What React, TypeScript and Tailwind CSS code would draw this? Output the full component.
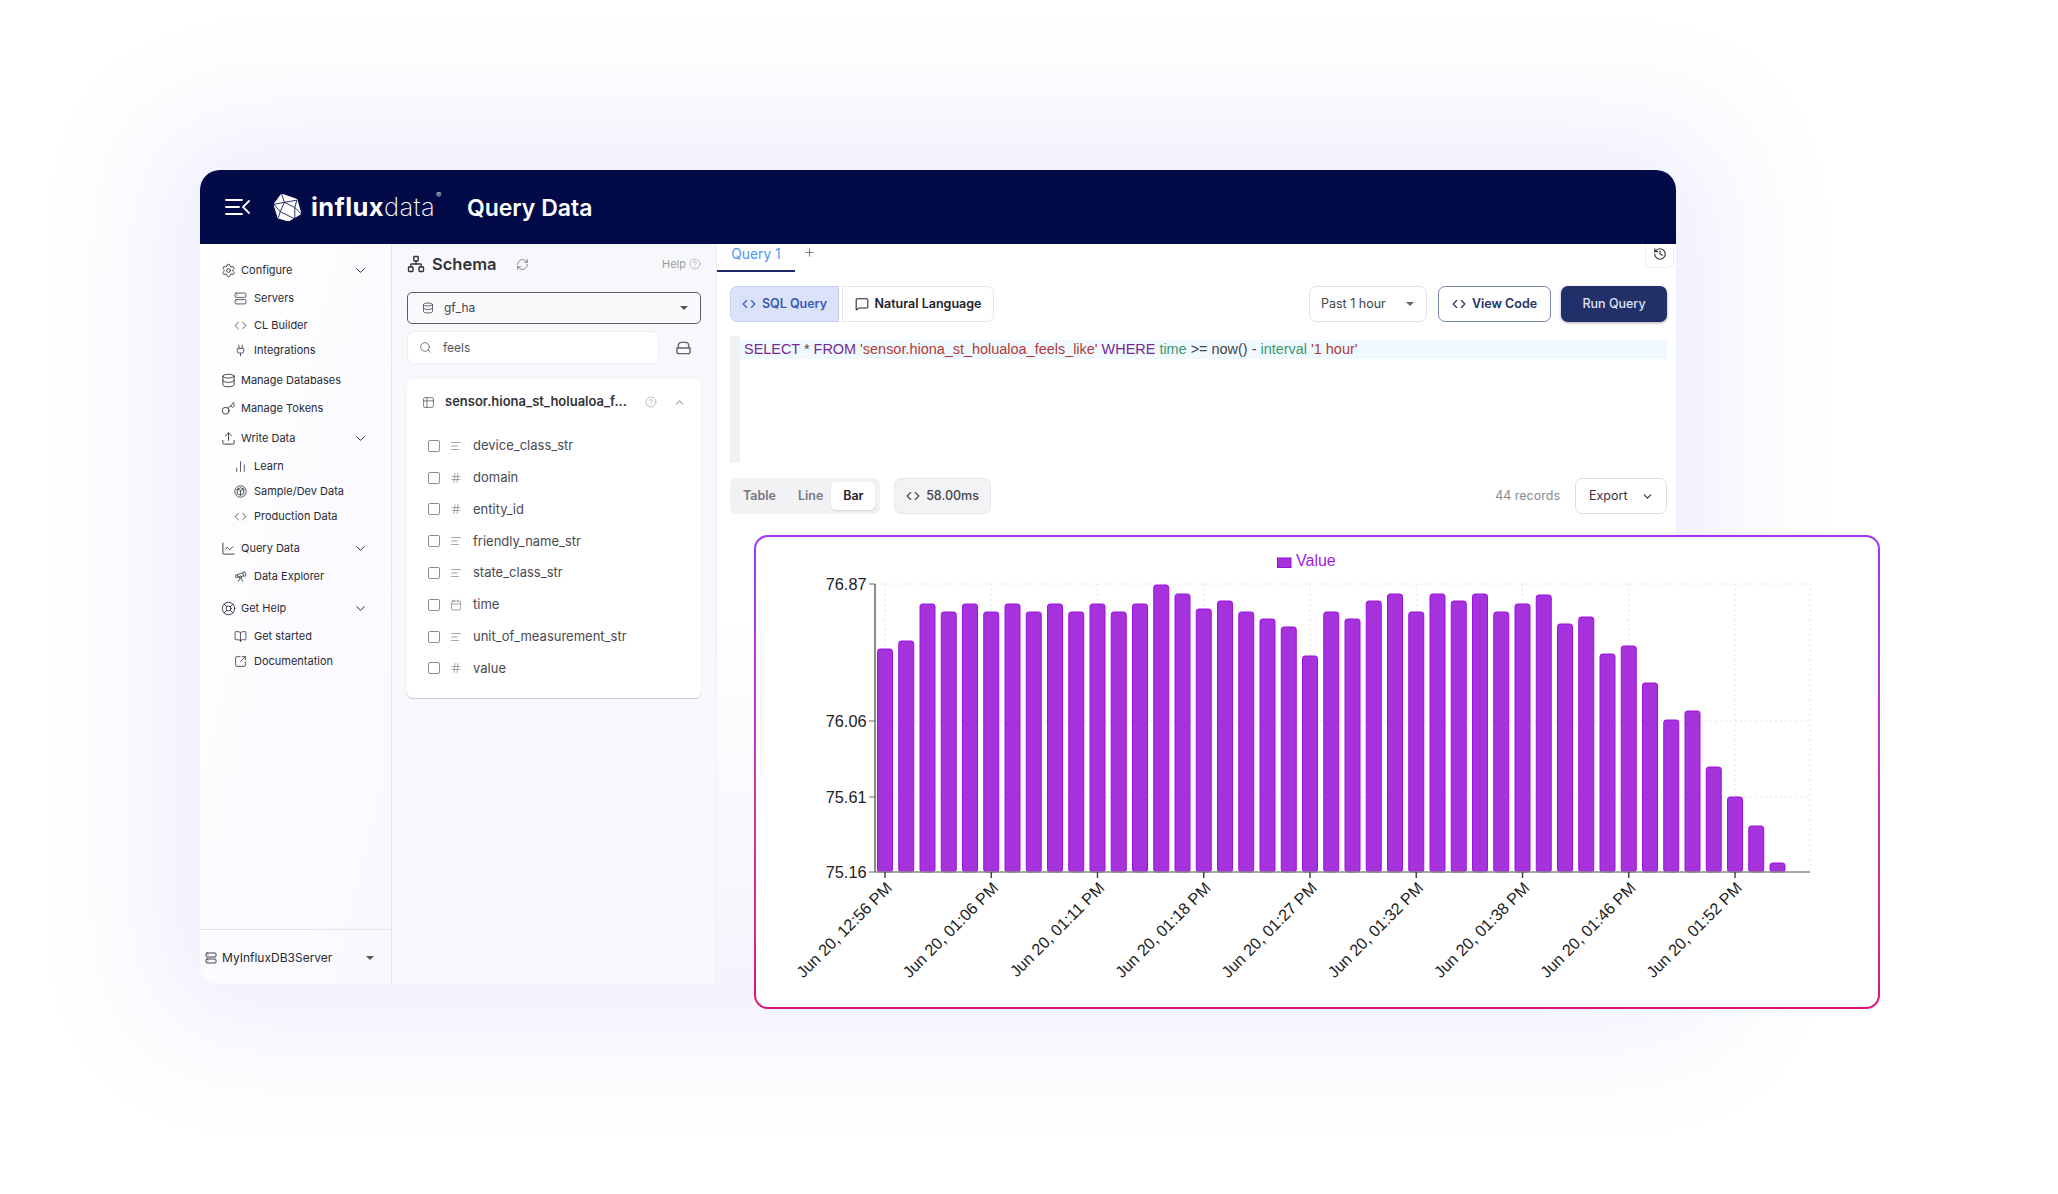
import React from "react";
import {
  BookOpen,
  Calendar,
  ChartLine,
  ChartNoAxesColumn,
  ChevronDown,
  ChevronUp,
  CircleHelp,
  Code,
  Database,
  Hash,
  History,
  Key,
  LifeBuoy,
  MessageSquare,
  Network,
  Plug,
  Plus,
  RefreshCw,
  Search,
  Server,
  Settings,
  SquareArrowOutUpRight,
  Table2,
  Telescope,
  Text,
  Upload,
} from "lucide-react";

type IconProps = { size?: number; strokeWidth?: number; className?: string };

const CubeCircle = ({ size = 13, className }: IconProps) => (
  <svg width={size} height={size} viewBox="0 0 16 16" fill="none" stroke="currentColor" strokeWidth="1" className={className}>
    <circle cx="8" cy="8" r="7" />
    <path d="M4 5 L8 3.4 L12 5 V10.8 L8 12.6 L4 10.8 Z M4 5 L8 6.8 L12 5 M8 6.8 V12.6" strokeLinejoin="round" />
  </svg>
);

const NAV = [
  { label: "Configure", Icon: Settings, top: true, chevron: true, gap: "mt-0" },
  { label: "Servers", Icon: Server, gap: "mt-[4px]" },
  { label: "CL Builder", Icon: Code, gap: "mt-[3px]" },
  { label: "Integrations", Icon: Plug, gap: "mt-[1px]" },
  { label: "Manage Databases", Icon: Database, top: true, gap: "mt-[6px]" },
  { label: "Manage Tokens", Icon: Key, top: true, gap: "mt-[4px]" },
  { label: "Write Data", Icon: Upload, top: true, chevron: true, gap: "mt-[6px]" },
  { label: "Learn", Icon: ChartNoAxesColumn, gap: "mt-[4px]" },
  { label: "Sample/Dev Data", Icon: CubeCircle, gap: "mt-[1px]" },
  { label: "Production Data", Icon: Code, gap: "mt-[1px]" },
  { label: "Query Data", Icon: ChartLine, top: true, chevron: true, gap: "mt-[8px]" },
  { label: "Data Explorer", Icon: Telescope, gap: "mt-[4px]" },
  { label: "Get Help", Icon: LifeBuoy, top: true, chevron: true, gap: "mt-[8px]" },
  { label: "Get started", Icon: BookOpen, gap: "mt-[4px]" },
  { label: "Documentation", Icon: SquareArrowOutUpRight, gap: "mt-[1px]" },
];

const FIELDS = [
  { name: "device_class_str", Icon: Text },
  { name: "domain", Icon: Hash },
  { name: "entity_id", Icon: Hash },
  { name: "friendly_name_str", Icon: Text },
  { name: "state_class_str", Icon: Text },
  { name: "time", Icon: Calendar },
  { name: "unit_of_measurement_str", Icon: Text },
  { name: "value", Icon: Hash },
];

// bar heights in pixels above the x axis
const BARS = [
  223, 231, 268, 260, 268, 260, 268, 260, 268, 260, 268, 260, 268, 287, 278, 263, 271, 260, 253, 245, 216, 260, 253, 271,
  278, 260, 278, 271, 278, 260, 268, 277, 248, 255, 218, 226, 189, 152, 161, 105, 75, 46, 9,
];

const X_LABELS = ["12:56", "01:06", "01:11", "01:18", "01:27", "01:32", "01:38", "01:46", "01:52"];

const Y_LABELS = [
  { label: "76.87", y: 583 },
  { label: "76.06", y: 720 },
  { label: "75.61", y: 796 },
  { label: "75.16", y: 871 },
];

const AXIS_Y = 871;

function Logo() {
  return (
    <svg width="27" height="27" viewBox="0 0 26 26" className="shrink-0">
      <polygon points="7.3,0 22,5.3 26,19 14,26 4,23 0,10" fill="#ffffff" stroke="#ffffff" strokeLinejoin="round" />
      <g fill="none" stroke="#020a47" strokeWidth="0.8" strokeLinejoin="round">
        <path d="M7.3,0 L10,8 L0,10 M10,8 L22,6 M10,8 L6,17 L0,10 M6,17 L4,23 M6,17 L20,24 M10,8 L20,13 L22,6 M20,13 L26,19 M20,13 L20,24" />
      </g>
    </svg>
  );
}

function Chart() {
  return (
    <svg viewBox="756 536 1122 470" className="block h-[470px] w-[1122px]">
      <rect x="1277.5" y="557" width="13.5" height="9.5" fill="#a632dc" stroke="#9a10e0" />
      <text x="1296" y="565" fontSize="16" fill="#a020e8" fontFamily="Liberation Sans, sans-serif">
        Value
      </text>
      <g stroke="#e4e4e4" strokeDasharray="2 3" strokeWidth="1">
        {Y_LABELS.slice(0, 3).map((t) => (
          <line key={t.y} x1="875" x2="1810" y1={t.y} y2={t.y} />
        ))}
        {X_LABELS.map((_, i) => (
          <line key={i} x1={885 + i * 106.25} x2={885 + i * 106.25} y1="583" y2={AXIS_Y} />
        ))}
        <line x1="1810" x2="1810" y1="583" y2={AXIS_Y} />
      </g>
      {BARS.map((h, i) => (
        <rect
          key={i}
          x={877.5 + i * 21.25}
          y={AXIS_Y - h}
          width="15"
          height={h}
          rx="2.5"
          fill="#a632dc"
          stroke="#9a10e0"
          strokeWidth="1"
        />
      ))}
      <line x1="875" x2="875" y1="583" y2={AXIS_Y} stroke="#666666" strokeWidth="1.5" />
      <line x1="875" x2="1810" y1={AXIS_Y} y2={AXIS_Y} stroke="#888888" strokeWidth="1.5" />
      {Y_LABELS.map((t) => (
        <g key={t.y}>
          <line x1="869" x2="875" y1={t.y} y2={t.y} stroke="#666666" strokeWidth="1" />
          <text
            x="866.5"
            y={t.y + 5.5}
            textAnchor="end"
            fontSize="16.3"
            fill="#222222"
            fontFamily="Liberation Sans, sans-serif"
          >
            {t.label}
          </text>
        </g>
      ))}
      {X_LABELS.map((t, i) => {
        const x = 885 + i * 106.25;
        return (
          <g key={t}>
            <line x1={x} x2={x} y1={AXIS_Y} y2={AXIS_Y + 6} stroke="#444444" strokeWidth="1.5" />
            <text
              x={x + 8}
              y={AXIS_Y + 17}
              textAnchor="end"
              fontSize="16.2"
              fill="#222222"
              fontFamily="Liberation Sans, sans-serif"
              transform={`rotate(-45 ${x + 8} ${AXIS_Y + 17})`}
            >
              {`Jun 20, ${t} PM`}
            </text>
          </g>
        );
      })}
    </svg>
  );
}

export default function App() {
  return (
    <div className="relative h-[1194px] w-[2058px] overflow-hidden bg-white pl-[200px] pt-[170px] font-['Inter',sans-serif]">
      <div className="flex h-[814px] w-[1476px] flex-col rounded-t-[20px] rounded-b-[18px] bg-white shadow-[0_0_120px_50px_rgba(95,95,245,0.1)]">
        <header className="flex h-[74px] shrink-0 items-center rounded-t-[20px] bg-[#020a47] pl-[25px] text-white">
          <svg width="25" height="18" viewBox="0 0 25 18" fill="none" stroke="#ffffff" strokeWidth="1.8" strokeLinecap="round">
            <path d="M1 2 H17 M1 9 H14 M1 16 H17 M24 3 L18 9 L24 15" />
          </svg>
          <div className="ml-[24px]">
            <Logo />
          </div>
          <div className="ml-[10px] flex items-start text-[25.5px] leading-none tracking-[0.4px]">
            <span className="font-bold">influx</span>
            <span className="font-extralight">data</span>
            <span className="ml-[1px] mt-[-3px] text-[8px] font-light">®</span>
          </div>
          <h1 className="ml-[25px] mt-[2px] text-[23px] font-semibold leading-none">Query Data</h1>
        </header>

        <div className="flex min-h-0 flex-1 rounded-b-[18px]">
          <aside className="flex w-[192px] shrink-0 flex-col rounded-bl-[18px] border-r border-[#e2e3ee] bg-gradient-to-br from-white to-[#f8f8ff] pt-[14px] text-[11px] text-[#2a2a33]">
            <nav className="flex-1">
              {NAV.map(({ label, Icon, top, chevron, gap }) => (
                <div key={label} className={`flex h-[24px] items-center ${gap} ${top ? "pl-[21px]" : "pl-[34px]"}`}>
                  <Icon size={top ? 15 : 13} strokeWidth={1.4} className="shrink-0" />
                  <span className={top ? "ml-[5px]" : "ml-[7px]"}>{label}</span>
                  {chevron && <ChevronDown size={15} strokeWidth={1.6} className="ml-auto mr-[23px]" />}
                </div>
              ))}
            </nav>
            <div className="flex h-[55px] items-center border-t border-[#e4e4ea] pl-[5px] pt-[2px] text-[12px]">
              <Server size={12} strokeWidth={1.8} />
              <span className="ml-[5px]">MyInfluxDB3Server</span>
              <span className="ml-auto mr-[17px] h-0 w-0 border-x-[4px] border-t-[4px] border-x-transparent border-t-[#555555]" />
            </div>
          </aside>

          <section className="flex w-[324px] shrink-0 flex-col bg-[#f7f8fc] pl-[15px] pr-[15px]">
            <div className="mt-[6px] flex h-[28px] items-center">
              <Network size={18} strokeWidth={1.8} className="text-[#333333]" />
              <span className="ml-[7px] text-[16.5px] font-semibold text-[#333338]">Schema</span>
              <RefreshCw size={13} strokeWidth={1.6} className="ml-[19px] text-[#777777]" />
              <span className="ml-auto text-[11px] text-[#9a9aa2]">Help</span>
              <CircleHelp size={12} strokeWidth={1.3} className="ml-[3px] text-[#9a9aa2]" />
            </div>
            <div className="mt-[14px] flex h-[32px] items-center rounded-[5px] border-[1.5px] border-[#5c5c60] bg-[#fafafc] pl-[14px] pr-[12px] text-[12px] text-[#44444c]">
              <Database size={12} strokeWidth={1.6} />
              <span className="ml-[10px]">gf_ha</span>
              <span className="ml-auto h-0 w-0 border-x-[4.5px] border-t-[4.5px] border-x-transparent border-t-[#555555]" />
            </div>
            <div className="mt-[7px] flex items-center">
              <div className="flex h-[33px] w-[252px] items-center rounded-[7px] border border-[#eeeef2] bg-white pl-[11px] text-[12px] text-[#55555c]">
                <Search size={13} strokeWidth={1.4} />
                <span className="ml-[11px]">feels</span>
              </div>
              <svg width="15" height="14" viewBox="0 0 16 14" fill="none" stroke="#666666" strokeWidth="1.5" strokeLinejoin="round" className="ml-[17px]">
                <path d="M2.5 7 V4 a3 3 0 0 1 3-3 h5 a3 3 0 0 1 3 3 V7 M1 7 h14 v4 a2 2 0 0 1-2 2 H3 a2 2 0 0 1-2-2 Z" />
              </svg>
            </div>
            <div className="mt-[15px] h-[319px] rounded-[6px] bg-white shadow-[0_1px_1px_#c9c9d2]">
              <div className="flex h-[46px] items-center pl-[15px] pr-[15px]">
                <Table2 size={13} strokeWidth={1.4} className="text-[#555555]" />
                <span className="ml-[10px] text-[13px] font-semibold text-[#33333a]">sensor.hiona_st_holualoa_f...</span>
                <CircleHelp size={12} strokeWidth={1.2} className="ml-auto mr-[16px] text-[#9a9aa2]" />
                <ChevronUp size={13} strokeWidth={1.6} className="text-[#666666]" />
              </div>
              <div className="pt-[5px]">
                {FIELDS.map(({ name, Icon }) => (
                  <div key={name} className="flex h-[31.8px] items-center pl-[21px] text-[13px] text-[#4a4a52]">
                    <span className="h-[12px] w-[12px] rounded-[2px] border-[1.5px] border-[#8c8c92]" />
                    <Icon size={12} strokeWidth={1.6} className="ml-[10px] text-[#8f8f96]" />
                    <span className="ml-[11px]">{name}</span>
                  </div>
                ))}
              </div>
            </div>
          </section>

          <main className="min-w-0 flex-1 rounded-br-[18px] border-l border-[#eeeef4] bg-gradient-to-b from-white via-white to-[#f4f4fd] pr-[9px]">
            <div className="flex h-[28px]">
              <div className="flex h-[28px] w-[78px] justify-center border-b-2 border-[#1d2a66] text-[13.8px] leading-[20px] text-[#4d96f2]">Query 1</div>
              <Plus size={13} strokeWidth={1.6} className="ml-[8px] mt-[2px] text-[#666666]" />
              <div className="ml-auto mr-[-7px] flex h-[24px] w-[29px] items-center justify-center rounded-b-[6px] border border-t-0 border-[#eeeef2] bg-white">
                <History size={14} strokeWidth={2} className="mt-[-4px] text-[#333333]" />
              </div>
            </div>

            <div className="mt-[14px] flex items-center pl-[13px] text-[12.5px]">
              <button className="flex h-[36px] w-[109px] items-center justify-center rounded-l-[7px] border border-[#c6d1f6] bg-[#dbe3fb] font-semibold text-[#3a58b8]">
                <Code size={14} strokeWidth={2} />
                <span className="ml-[6px]">SQL Query</span>
              </button>
              <button className="ml-[3px] flex h-[36px] w-[152px] items-center justify-center rounded-r-[7px] border border-[#e6e6ee] bg-white font-semibold text-[#22222a]">
                <MessageSquare size={14} strokeWidth={1.8} />
                <span className="ml-[6px]">Natural Language</span>
              </button>
              <button className="ml-auto flex h-[36px] w-[118px] items-center rounded-[7px] border border-[#dfdfe6] bg-white pl-[11px] pr-[12px] text-[#44444c]">
                Past 1 hour
                <span className="ml-auto h-0 w-0 border-x-[4px] border-t-[4px] border-x-transparent border-t-[#666666]" />
              </button>
              <button className="ml-[11px] flex h-[36px] w-[113px] items-center justify-center rounded-[7px] border border-[#7a86b4] bg-white font-semibold text-[#22306a]">
                <Code size={14} strokeWidth={2} />
                <span className="ml-[6px]">View Code</span>
              </button>
              <button className="ml-[10px] h-[36px] w-[106px] rounded-[7px] bg-[#22306a] font-medium text-[#dfe3f4] shadow-[0_1px_3px_rgba(0,0,0,0.35)]">
                Run Query
              </button>
            </div>

            <div className="mt-[14px] flex h-[127px] pl-[13px]">
              <div className="w-[10px] shrink-0 bg-[#f1f2f5]" />
              <div className="flex-1 pt-[4px]">
                <div className="h-[19px] whitespace-pre bg-[#f0f9fe] pl-[4px] font-['Liberation_Sans',sans-serif] text-[14.45px] leading-[19px] text-[#444444]">
                  <span className="text-[#7a2a90]">SELECT</span>
                  {" * "}
                  <span className="text-[#7a2a90]">FROM</span>
                  {" "}
                  <span className="text-[#b03a3a]">'sensor.hiona_st_holualoa_feels_like'</span>
                  {" "}
                  <span className="text-[#7a2a90]">WHERE</span>
                  {" "}
                  <span className="text-[#3a9a70]">time</span>
                  {" >= now() - "}
                  <span className="text-[#3a9a70]">interval</span>
                  {" "}
                  <span className="text-[#b03a3a]">'1 hour'</span>
                </div>
              </div>
            </div>

            <div className="mt-[15px] flex items-center pl-[13px] text-[12.5px]">
              <div className="flex h-[36px] w-[150px] items-center rounded-[6px] bg-[#f2f2f5] pl-[13px] font-semibold text-[#77777e]">
                <span>Table</span>
                <span className="ml-[22px]">Line</span>
                <span className="ml-[8px] flex h-[28px] w-[44px] items-center justify-center rounded-[5px] bg-white text-[#22222a] shadow-[0_1px_2px_rgba(0,0,0,0.12)]">Bar</span>
              </div>
              <div className="ml-[14px] flex h-[36px] w-[97px] items-center justify-center rounded-[7px] border border-[#e6e6ec] bg-[#f3f3f6] text-[#44444c]">
                <Code size={14} strokeWidth={2} />
                <span className="ml-[6px] font-medium">58.00ms</span>
              </div>
              <span className="ml-auto text-[#8b8b92]">44 records</span>
              <button className="ml-[15px] flex h-[36px] w-[92px] items-center rounded-[7px] border border-[#dcdce2] bg-white pl-[13px] pr-[12px] text-[#33333a]">
                Export
                <ChevronDown size={13} strokeWidth={2} className="ml-auto" />
              </button>
            </div>
          </main>
        </div>
      </div>

      <div className="absolute left-[754px] top-[535px] rounded-[14px] bg-gradient-to-b from-[#a035f5] to-[#e0107a] p-[2px]">
        <div className="rounded-[12px] bg-white">
          <Chart />
        </div>
      </div>
    </div>
  );
}
